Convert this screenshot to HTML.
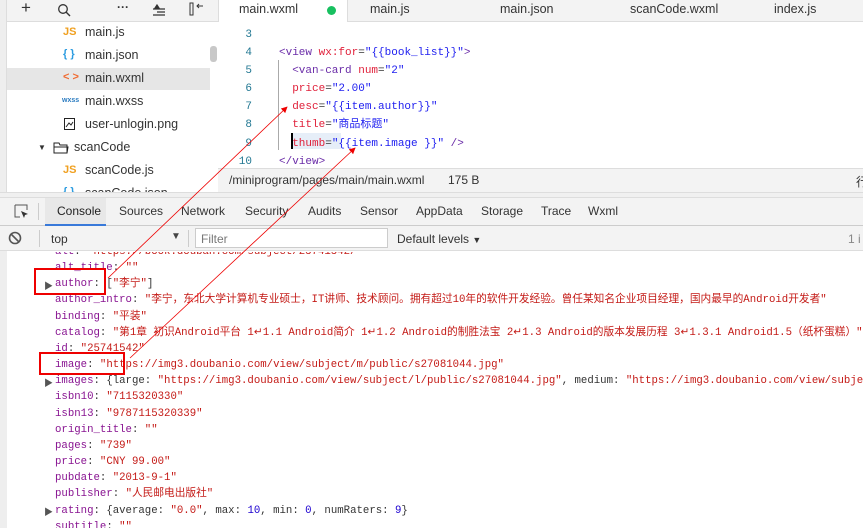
<!DOCTYPE html>
<html><head><meta charset="utf-8"><style>
*{margin:0;padding:0;box-sizing:border-box}
body{width:863px;height:528px;overflow:hidden;background:#fff;font-family:"Liberation Sans","Noto Sans CJK SC",sans-serif;font-size:12px;color:#333;position:relative}
.abs{position:absolute;white-space:nowrap}
.mono{font-family:"Liberation Mono","Noto Sans CJK SC",monospace;font-size:10.7px}
.k{color:#881391}.s{color:#c41a16}.n{color:#1c00cf}.d{color:#333}
.tg{color:#6a2ca8}.at{color:#e0203a}.st{color:#2020f0}
</style></head><body>
<div class="abs" style="left:0;top:0;width:7px;height:198px;background:#eee;border-right:1px solid #ddd"></div>
<div class="abs" style="left:7px;top:0;width:211px;height:22px;background:#f3f3f3;border-bottom:1px solid #ddd"></div>
<div class="abs" style="left:21px;top:-2px;font-size:17px;color:#333">+</div>
<svg class="abs" style="left:57px;top:3px" width="14" height="14"><circle cx="6" cy="6" r="4.3" fill="none" stroke="#333" stroke-width="1.3"/><line x1="9" y1="9" x2="13" y2="13" stroke="#333" stroke-width="1.4"/></svg>
<div class="abs" style="left:117px;top:0px;font-size:12px;font-weight:bold">···</div>
<svg class="abs" style="left:152px;top:4px" width="14" height="12"><path d="M5 1 L3 4 H7Z M1 5H13 M5 8H13 M1 11H13" stroke="#333" fill="#333" stroke-width="1.2"/></svg>
<svg class="abs" style="left:189px;top:2px" width="16" height="14"><rect x="1" y="1" width="3" height="12" fill="none" stroke="#333"/><path d="M14 4H8 M10 2L8 4L10 6" stroke="#333" fill="none"/></svg>
<div class="abs" style="left:7px;top:68px;width:203px;height:22px;background:#e6e6e6"></div>
<div class="abs" style="left:210px;top:46px;width:7px;height:16px;background:#c8c8c8;border-radius:3px"></div>
<div class="abs" style="left:63px;top:26px;color:#f0a020;font-size:11px;font-weight:bold">JS</div><div class="abs" style="left:85px;top:25px;font-size:12.5px">main.js</div>
<div class="abs" style="left:63px;top:48px;color:#2a9be0;font-size:11px;font-weight:bold">{ }</div><div class="abs" style="left:85px;top:48px;font-size:12.5px">main.json</div>
<div class="abs" style="left:63px;top:71px;color:#f06a30;font-size:11px;font-weight:bold">&lt; &gt;</div><div class="abs" style="left:85px;top:71px;font-size:12.5px">main.wxml</div>
<div class="abs" style="left:62px;top:97px;color:#2a7bc0;font-size:7px;font-weight:bold">wxss</div><div class="abs" style="left:85px;top:94px;font-size:12.5px">main.wxss</div>
<svg class="abs" style="left:64px;top:118px" width="11" height="12"><rect x="0.5" y="0.5" width="10" height="11" fill="none" stroke="#222"/><path d="M2 9L5 5L7 7L9 4" stroke="#222" fill="none"/></svg><div class="abs" style="left:85px;top:117px;font-size:12.5px">user-unlogin.png</div>
<div class="abs" style="left:38px;top:143px;font-size:8px">▼</div>
<svg class="abs" style="left:53px;top:141px" width="16" height="13"><path d="M1 2H6L7 4H14V12H1Z M1 6H15L14 12" stroke="#222" fill="none"/></svg><div class="abs" style="left:74px;top:140px;font-size:12.5px">scanCode</div>
<div class="abs" style="left:63px;top:164px;color:#f0a020;font-size:11px;font-weight:bold">JS</div><div class="abs" style="left:85px;top:163px;font-size:12.5px">scanCode.js</div>
<div class="abs" style="left:63px;top:186px;color:#2a9be0;font-size:11px;font-weight:bold">{ }</div><div class="abs" style="left:85px;top:186px;font-size:12.5px">scanCode.json</div>
<div class="abs" style="left:218px;top:0;width:645px;height:22px;background:#f3f3f3;border-bottom:1px solid #ddd;border-left:1px solid #ddd"></div>
<div class="abs" style="left:219px;top:0;width:129px;height:22px;background:#fff;border-right:1px solid #ddd"></div>
<div class="abs" style="left:239px;top:2px;font-size:12.5px">main.wxml</div>
<div class="abs" style="left:327px;top:6px;width:9px;height:9px;border-radius:50%;background:#18c060"></div>
<div class="abs" style="left:370px;top:2px;font-size:12.5px">main.js</div>
<div class="abs" style="left:500px;top:2px;font-size:12.5px">main.json</div>
<div class="abs" style="left:630px;top:2px;font-size:12.5px">scanCode.wxml</div>
<div class="abs" style="left:774px;top:2px;font-size:12.5px">index.js</div>
<div class="abs mono" style="left:236px;top:26px;width:16px;text-align:right;color:#237893;line-height:18.1px;font-size:11px">3<br>4<br>5<br>6<br>7<br>8<br>9<br>10</div>
<div class="abs" style="left:278px;top:60px;width:1px;height:90px;background:#aaa"></div>
<div class="abs" style="left:291px;top:133px;width:50px;height:16px;background:#e6eef8"></div>
<div class="abs" style="left:291px;top:133px;width:2px;height:16px;background:#000"></div>
<div class="abs mono" style="left:279px;top:26px;line-height:18.1px;font-size:11px">
<br><span class="tg">&lt;view</span> <span class="at">wx:for</span>=<span class="st">"{{book_list}}"</span><span class="tg">&gt;</span><br>
&nbsp;&nbsp;<span class="tg">&lt;van-card</span> <span class="at">num</span>=<span class="st">"2"</span><br>
&nbsp;&nbsp;<span class="at">price</span>=<span class="st">"2.00"</span><br>
&nbsp;&nbsp;<span class="at">desc</span>=<span class="st">"{{item.author}}"</span><br>
&nbsp;&nbsp;<span class="at">title</span>=<span class="st">"商品标题"</span><br>
&nbsp;&nbsp;<span class="at">thumb</span>=<span class="st">"{{item.image }}"</span> <span class="tg">/&gt;</span><br>
<span class="tg">&lt;/view&gt;</span></div>
<div class="abs" style="left:218px;top:168px;width:645px;height:24px;background:#f3f3f3;border-top:1px solid #ddd"></div>
<div class="abs" style="left:229px;top:173px;font-size:12px">/miniprogram/pages/main/main.wxml</div>
<div class="abs" style="left:448px;top:173px;font-size:12px">175 B</div>
<div class="abs" style="left:856px;top:173px;font-size:12px">行</div>
<div class="abs" style="left:0;top:192px;width:863px;height:6px;background:#f0f0f0;border-top:1px solid #ddd;border-bottom:1px solid #ddd"></div>
<div class="abs" style="left:0;top:198px;width:863px;height:28px;background:#f3f3f3;border-bottom:1px solid #ccc"></div>
<svg class="abs" style="left:14px;top:204px" width="16" height="16"><path d="M1 1H13V6 M1 1V13H6" stroke="#555" fill="none"/><path d="M7 7L14 10L11 11L10 14Z" fill="#333"/></svg>
<div class="abs" style="left:38px;top:203px;width:1px;height:17px;background:#ccc"></div>
<div class="abs" style="left:45px;top:198px;width:61px;height:28px;background:#e8e8e8;border-bottom:2px solid #3879d9"></div>
<div class="abs" style="left:57px;top:204px;font-size:12px;color:#222">Console</div>
<div class="abs" style="left:119px;top:204px;font-size:12px">Sources</div>
<div class="abs" style="left:181px;top:204px;font-size:12px">Network</div>
<div class="abs" style="left:245px;top:204px;font-size:12px">Security</div>
<div class="abs" style="left:308px;top:204px;font-size:12px">Audits</div>
<div class="abs" style="left:360px;top:204px;font-size:12px">Sensor</div>
<div class="abs" style="left:416px;top:204px;font-size:12px">AppData</div>
<div class="abs" style="left:481px;top:204px;font-size:12px">Storage</div>
<div class="abs" style="left:541px;top:204px;font-size:12px">Trace</div>
<div class="abs" style="left:588px;top:204px;font-size:12px">Wxml</div>
<div class="abs" style="left:0;top:226px;width:863px;height:25px;background:#f3f3f3;border-bottom:1px solid #ddd"></div>
<svg class="abs" style="left:8px;top:231px" width="14" height="14"><circle cx="7" cy="7" r="5.5" fill="none" stroke="#555" stroke-width="1.6"/><line x1="3" y1="3" x2="11" y2="11" stroke="#555" stroke-width="1.6"/></svg>
<div class="abs" style="left:39px;top:230px;width:1px;height:17px;background:#ccc"></div>
<div class="abs" style="left:51px;top:232px;font-size:12px">top</div>
<div class="abs" style="left:171px;top:231px;font-size:10px;color:#444">▼</div>
<div class="abs" style="left:188px;top:230px;width:1px;height:17px;background:#ccc"></div>
<div class="abs" style="left:195px;top:228px;width:193px;height:20px;background:#fff;border:1px solid #ccc"></div>
<div class="abs" style="left:201px;top:232px;font-size:12px;color:#777">Filter</div>
<div class="abs" style="left:397px;top:232px;font-size:12px">Default levels <span style="font-size:9px">▼</span></div>
<div class="abs" style="left:848px;top:232px;font-size:12px;color:#888">1 i</div>
<div class="abs" style="left:0;top:251px;width:7px;height:277px;background:#eee"></div>
<div class="abs" style="left:7px;top:252px;width:856px;height:276px;overflow:hidden">
<div class="abs mono" style="left:48px;top:-8px;line-height:16.15px">
<span class="k">alt</span>: <span class="s">"https://book.douban.com/subject/25741542/"</span><br>
<span class="k">alt_title</span>: <span class="s">""</span><br>
<span class="k">author</span>: <span class="d">[</span><span class="s">"李宁"</span><span class="d">]</span><br>
<span class="k">author_intro</span>: <span class="s">"李宁，东北大学计算机专业硕士，IT讲师、技术顾问。拥有超过10年的软件开发经验。曾任某知名企业项目经理，国内最早的Android开发者"</span><br>
<span class="k">binding</span>: <span class="s">"平装"</span><br>
<span class="k">catalog</span>: <span class="s">"第1章  初识Android平台 1↵1.1 Android简介 1↵1.2 Android的制胜法宝 2↵1.3 Android的版本发展历程 3↵1.3.1 Android1.5（纸杯蛋糕）"</span><br>
<span class="k">id</span>: <span class="s">"25741542"</span><br>
<span class="k">image</span>: <span class="s">"https://img3.doubanio.com/view/subject/m/public/s27081044.jpg"</span><br>
<span class="k">images</span>: <span class="d">{large: </span><span class="s">"https://img3.doubanio.com/view/subject/l/public/s27081044.jpg"</span><span class="d">, medium: </span><span class="s">"https://img3.doubanio.com/view/subject"</span><br>
<span class="k">isbn10</span>: <span class="s">"7115320330"</span><br>
<span class="k">isbn13</span>: <span class="s">"9787115320339"</span><br>
<span class="k">origin_title</span>: <span class="s">""</span><br>
<span class="k">pages</span>: <span class="s">"739"</span><br>
<span class="k">price</span>: <span class="s">"CNY 99.00"</span><br>
<span class="k">pubdate</span>: <span class="s">"2013-9-1"</span><br>
<span class="k">publisher</span>: <span class="s">"人民邮电出版社"</span><br>
<span class="k">rating</span>: <span class="d">{average: </span><span class="s">"0.0"</span><span class="d">, max: </span><span class="n">10</span><span class="d">, min: </span><span class="n">0</span><span class="d">, numRaters: </span><span class="n">9</span><span class="d">}</span><br>
<span class="k">subtitle</span>: <span class="s">""</span></div>
</div>
<div class="abs" style="left:44px;top:279px;font-size:9px;color:#555">▶</div>
<div class="abs" style="left:44px;top:376px;font-size:9px;color:#555">▶</div>
<div class="abs" style="left:44px;top:505px;font-size:9px;color:#555">▶</div>
<div class="abs" style="left:34px;top:268px;width:72px;height:27px;border:2px solid #e00"></div>
<div class="abs" style="left:39px;top:352px;width:86px;height:23px;border:2px solid #e00"></div>
<svg class="abs" style="left:0;top:0" width="863" height="528">
<defs><marker id="a" markerWidth="8" markerHeight="8" refX="7" refY="4" orient="auto"><path d="M0 0L8 4L0 8Z" fill="#e00"/></marker></defs>
<line x1="108" y1="278" x2="287" y2="107" stroke="#e00" stroke-width="0.8" marker-end="url(#a)"/>
<line x1="130" y1="358" x2="355" y2="148" stroke="#e00" stroke-width="0.8" marker-end="url(#a)"/>
</svg>
</body></html>
